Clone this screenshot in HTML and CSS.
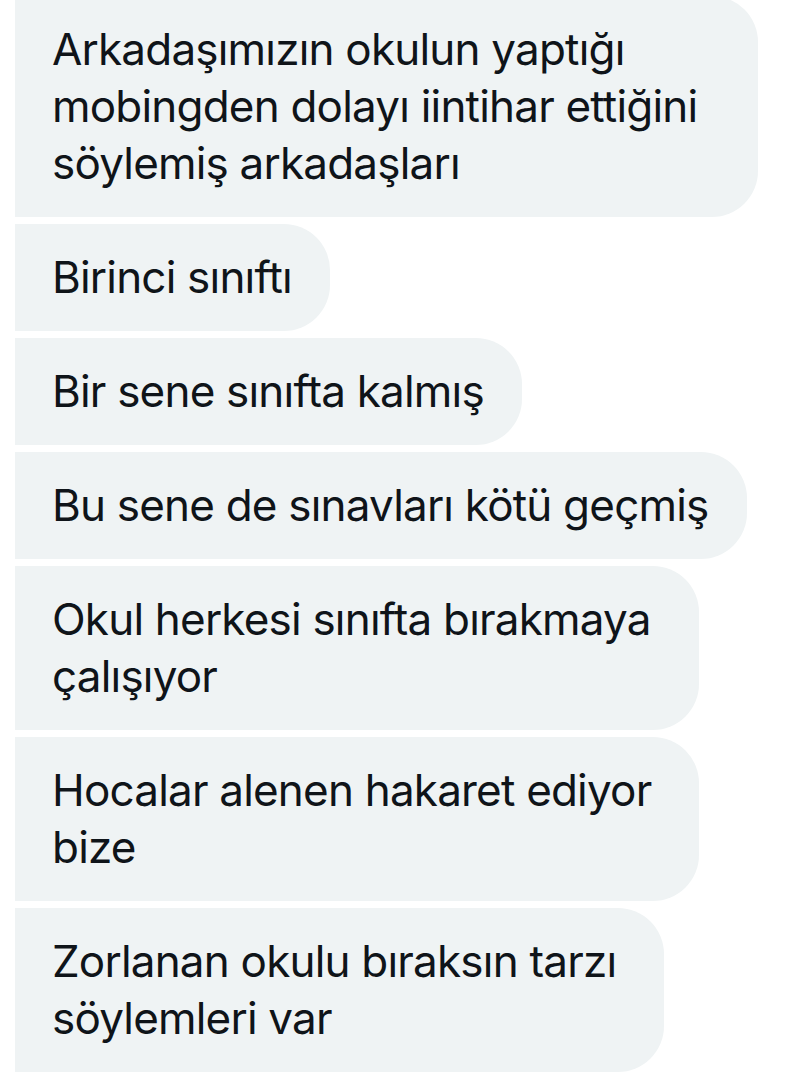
FILE: index.html
```html
<!DOCTYPE html>
<html lang="tr">
<head>
<meta charset="utf-8">
<title>Mesajlar</title>
<link rel="stylesheet" href="styles.css">
</head>
<body>
<div class="thread">
  <div class="bubble bubble--full">Arkadaşımızın okulun yaptığı<br>mobingden dolayı iintihar ettiğini<br>söylemiş arkadaşları</div>
  <div class="bubble">Birinci sınıftı</div>
  <div class="bubble">Bir sene sınıfta kalmış</div>
  <div class="bubble">Bu sene de sınavları kötü geçmiş</div>
  <div class="bubble bubble--wrap">Okul herkesi sınıfta bırakmaya<br>çalışıyor</div>
  <div class="bubble bubble--wrap">Hocalar alenen hakaret ediyor<br>bize</div>
  <div class="bubble bubble--wrap">Zorlanan okulu bıraksın tarzı<br>söylemleri var</div>
</div>
</body>
</html>
```

FILE: styles.css
```css
html, body {
  margin: 0;
  padding: 0;
  background: #ffffff;
}

body {
  width: 796px;
  height: 1080px;
  overflow: hidden;
  font-family: Inter, "Noto Sans", sans-serif;
  color: #0f1419;
}

.thread {
  display: flex;
  flex-direction: column;
  align-items: flex-start;
  gap: 7px;
  margin-top: -4px;
  padding-left: 15px;
}

.bubble {
  box-sizing: border-box;
  background: #eff3f4;
  padding: 25px 38px 25px 37px;
  font-size: 44px;
  letter-spacing: -0.8px;
  line-height: 57px;
  white-space: nowrap;
  border-radius: 0 46px 46px 0;
}

.bubble--wrap {
  padding-right: 48px;
}

.bubble--full {
  width: 743px;
}
```
